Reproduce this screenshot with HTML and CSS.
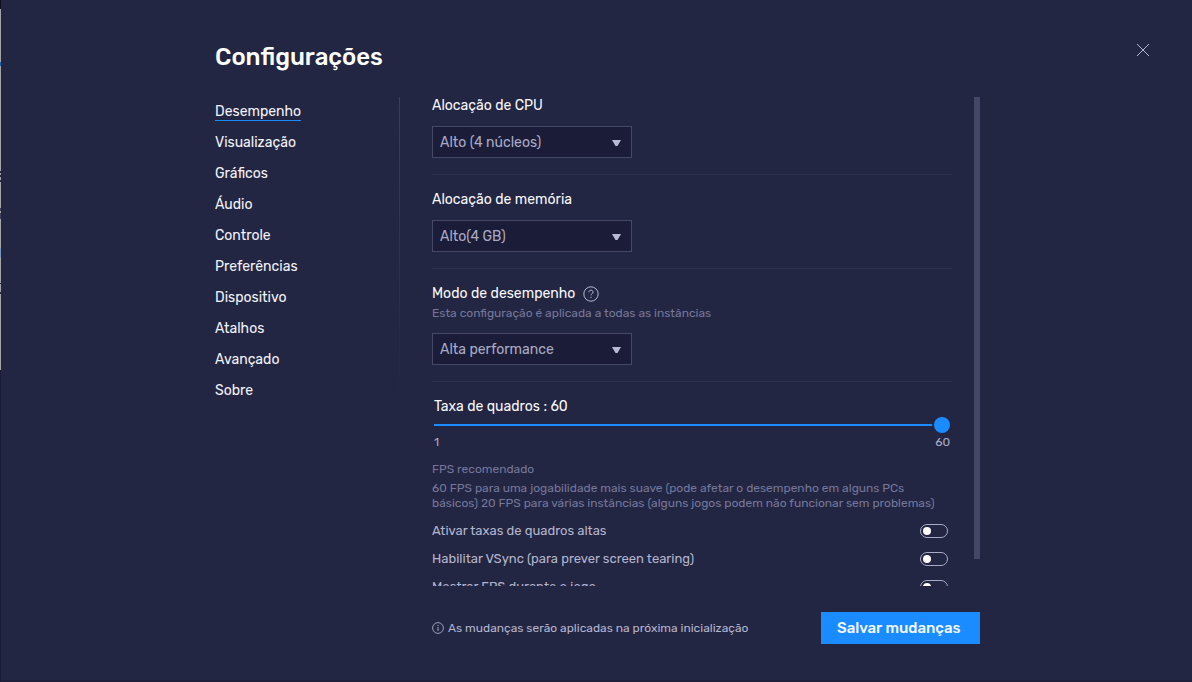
FILE: index.html
```html
<!DOCTYPE html>
<html lang="pt-BR">
<head>
<meta charset="utf-8">
<meta name="viewport" content="width=device-width, initial-scale=1">
<title>Configurações</title>
<link rel="stylesheet" href="styles.css">
</head>
<body>
<div class="edge" aria-hidden="true"></div>
<div class="window">
  <header class="header">
    <h1 class="title">Configurações</h1>
    <button class="close" type="button" aria-label="Fechar">
      <svg width="14" height="14" viewBox="0 0 14 14" fill="none" stroke="#b5b8d2" stroke-width="1"><path d="M1 1l12 12M13 1L1 13"/></svg>
    </button>
  </header>
  <div class="body">
    <nav class="nav">
      <a class="link active" href="#desempenho">Desempenho</a>
      <a class="link" href="#visualizacao">Visualização</a>
      <a class="link" href="#graficos">Gráficos</a>
      <a class="link" href="#audio">Áudio</a>
      <a class="link" href="#controle">Controle</a>
      <a class="link" href="#preferencias">Preferências</a>
      <a class="link" href="#dispositivo">Dispositivo</a>
      <a class="link" href="#atalhos">Atalhos</a>
      <a class="link" href="#avancado">Avançado</a>
      <a class="link" href="#sobre">Sobre</a>
    </nav>
    <div class="divider"></div>
    <main class="content">
      <div class="viewport">
        <div class="settings">
          <section class="section">
            <label class="label" for="cpu">Alocação de CPU</label>
            <div class="dropdown">
              <select class="select" id="cpu"><option>Alto (4 núcleos)</option></select>
              <svg class="arrow" width="9" height="7" viewBox="0 0 9 7" fill="#b8bad3"><path d="M0 0h9L5.5 6h-2z"/></svg>
            </div>
          </section>
          <section class="section">
            <label class="label" for="mem">Alocação de memória</label>
            <div class="dropdown">
              <select class="select" id="mem"><option>Alto(4 GB)</option></select>
              <svg class="arrow" width="9" height="7" viewBox="0 0 9 7" fill="#b8bad3"><path d="M0 0h9L5.5 6h-2z"/></svg>
            </div>
          </section>
          <section class="section">
            <div class="label-row">
              <label class="label" for="mode">Modo de desempenho</label>
              <svg width="16" height="16" viewBox="0 0 16 16" fill="none" stroke="#b5b8d2"><circle cx="8" cy="8" r="7.2"/><path d="M5.9 6.3c0-1.3.9-2.1 2.1-2.1s2.1.8 2.1 1.9c0 1.6-2.1 1.6-2.1 3.2"/><path d="M8 10.8v1.2"/></svg>
            </div>
            <p class="hint">Esta configuração é aplicada a todas as instâncias</p>
            <div class="dropdown">
              <select class="select" id="mode"><option>Alta performance</option></select>
              <svg class="arrow" width="9" height="7" viewBox="0 0 9 7" fill="#b8bad3"><path d="M0 0h9L5.5 6h-2z"/></svg>
            </div>
          </section>
          <section class="section">
            <div class="rate">
              <label class="label" for="fps">Taxa de quadros : 60</label>
              <input class="range" id="fps" type="range" min="1" max="60" value="60">
              <div class="scale"><span>1</span><span>60</span></div>
            </div>
            <p class="fps-title">FPS recomendado</p>
            <p class="fps-text">60 FPS para uma jogabilidade mais suave (pode afetar o desempenho em alguns PCs básicos) 20 FPS para várias instâncias (alguns jogos podem não funcionar sem problemas)</p>
            <div class="toggles">
              <label class="toggle-row">Ativar taxas de quadros altas<input class="toggle" type="checkbox"></label>
              <label class="toggle-row">Habilitar VSync (para prever screen tearing)<input class="toggle" type="checkbox"></label>
              <label class="toggle-row">Mostrar FPS durante o jogo<input class="toggle" type="checkbox"></label>
            </div>
          </section>
        </div>
        <div class="scrollbar"><div class="thumb"></div></div>
      </div>
      <footer class="footer">
        <p class="notice">
          <svg width="12" height="12" viewBox="0 0 12 12" fill="none" stroke="#a9abc6"><circle cx="6" cy="6" r="5.4" stroke-width=".9"/><path d="M6 5v4M6 3v1"/></svg>
          As mudanças serão aplicadas na próxima inicialização
        </p>
        <button class="save" type="button">Salvar mudanças</button>
      </footer>
    </main>
  </div>
</div>
</body>
</html>
```
FILE: styles.css
```css
* { box-sizing: border-box; }

body {
  margin: 0;
  display: flex;
  height: 100vh;
  background: #232642;
  color: #fff;
  font: 14px/16px Rubik, Inter, sans-serif;
}

h1, p { margin: 0; }

.edge {
  width: 1px;
  flex: none;
  background: linear-gradient(#0c0d18 9px, #a3a4a8 9px 62px, #1f62b4 62px 66px, #a3a4a8 66px 171px, #232642 171px 173px, #a3a4a8 173px 175px, #232642 175px 177px, #a3a4a8 177px 180px, #232642 180px 182px, #a3a4a8 182px 208px, #44405e 208px 211px, #a3a4a8 211px 213px, #44405e 213px 219px, #a3a4a8 219px 248px, #7894c0 248px 257px, #a3a4a8 257px 283px, #232642 283px 284px, #a3a4a8 284px 292px, #232642 292px 294px, #a3a4a8 294px 370px, #1b1d38 370px);
}

.window {
  flex: 1;
  min-width: 0;
  display: flex;
  flex-direction: column;
  padding-bottom: 36px;
  border-bottom: 2px solid #1f213c;
}

.header {
  display: flex;
  justify-content: space-between;
  align-items: flex-start;
  padding: 42px 42px 25px 214px;
}

.title { font-size: 24px; line-height: 30px; font-weight: 500; }

.close {
  display: flex;
  margin-top: 1px;
  padding: 0;
  border: 0;
  background: none;
  cursor: pointer;
}

.body {
  flex: 1;
  min-height: 0;
  display: flex;
  padding: 0 212px 0 214px;
}

.nav {
  width: 184px;
  flex: none;
  display: flex;
  flex-direction: column;
  align-items: flex-start;
  gap: 14px;
  padding-top: 7px;
}

.link {
  color: #f2f3fa;
  text-decoration: none;
  border-bottom: 1px solid transparent;
}

.active { border-color: #1a8cff; }

.divider {
  width: 1px;
  flex: none;
  height: 300px;
  background: linear-gradient(#3a3d5c, #232642);
}

.content {
  flex: 1;
  min-width: 0;
  display: flex;
  flex-direction: column;
  gap: 26px;
  padding-left: 32px;
}

.viewport {
  flex: 1;
  min-height: 0;
  display: flex;
  gap: 22px;
}

.settings {
  flex: 1;
  min-width: 0;
  overflow-y: auto;
  scrollbar-width: none;
}

.scrollbar { width: 6px; flex: none; }
.thumb { height: 94.5%; background: #454766; }

.section {
  padding-bottom: 16px;
  margin-bottom: 16px;
  border-bottom: 1px solid #2d3050;
}

.section:last-child { border: 0; }

.label { display: block; line-height: 18px; color: #f8f8fd; }
.label-row { display: flex; align-items: center; gap: 8px; }

.hint {
  margin-top: 2px;
  color: #74779a;
  font-size: 12px;
}

.dropdown {
  display: grid;
  align-items: center;
  width: 200px;
  margin-top: 11px;
}

.hint + .dropdown { margin-top: 12px; }

.select, .arrow { grid-area: 1 / 1; }

.select {
  appearance: none;
  height: 32px;
  padding: 2px 7px 0;
  border: 1px solid #454866;
  border-radius: 0;
  background: #1b1d38;
  color: #a9abc6;
  font: inherit;
}

.arrow { justify-self: end; margin: 3px 11px 0 0; pointer-events: none; }

.rate { padding: 0 2px; }

.range {
  appearance: none;
  display: block;
  width: 100%;
  height: 16px;
  margin: 1px 0;
  background: linear-gradient(#1a8cff, #1a8cff) center / 100% 2px no-repeat;
}

.range::-webkit-slider-thumb {
  appearance: none;
  width: 16px;
  height: 16px;
  border-radius: 50%;
  background: #1a8cff;
  box-shadow: 0 0 0 2px #232642;
}

.scale {
  display: flex;
  justify-content: space-between;
  color: #a9abc6;
  font-size: 12px;
}

.fps-title { margin-top: 11px; color: #74779a; font-size: 12px; }

.fps-text {
  margin-top: 4px;
  color: #74779a;
  font-size: 12px;
  line-height: 15px;
}

.toggles {
  display: flex;
  flex-direction: column;
  gap: 12px;
  margin-top: 12px;
}

.toggle-row {
  display: flex;
  justify-content: space-between;
  align-items: center;
  padding-right: 4px;
  color: #b3b5ce;
  font-size: 13px;
}

.toggle {
  appearance: none;
  display: flex;
  align-items: center;
  width: 28px;
  height: 14px;
  margin: 0;
  padding-left: 2px;
  border: 1px solid #a9abc6;
  border-radius: 7px;
}

.toggle::before {
  content: "";
  width: 8px;
  height: 8px;
  border-radius: 50%;
  background: #fff;
}

.toggle:checked { justify-content: flex-end; padding: 0 2px 0 0; }

.footer {
  display: flex;
  justify-content: space-between;
  align-items: center;
}

.notice {
  display: flex;
  align-items: center;
  gap: 4px;
  color: #b3b5ce;
  font-size: 12px;
}

.save {
  min-width: 159px;
  height: 32px;
  padding: 0 16px;
  border: 0;
  background: #1a8cff;
  color: #f4f8ff;
  font: inherit;
  font-size: 15px;
  font-weight: 500;
  text-align: left;
}
```
